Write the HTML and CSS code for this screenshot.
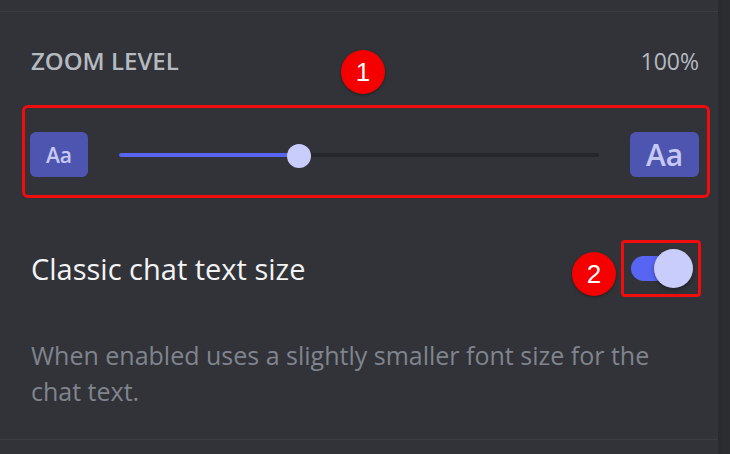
FILE: index.html
```html
<!doctype html>
<html lang="en">
<head>
	<meta charset="UTF-8">
	<title>Zoom level</title>
	<link rel="stylesheet" href="styles.css">
</head>
<body>
	<div class="panel">
		<div class="content">
			<div class="rule"></div>
			<div class="section-head">
				<span class="section-title">ZOOM LEVEL</span>
				<span class="section-value">100%</span>
			</div>
			<div class="slider-box">
				<span class="aa aa-small">Aa</span>
				<div class="track">
					<div class="track-fill" style="width: 37.5%"></div>
					<span class="thumb" style="left: 37.5%"></span>
				</div>
				<span class="aa aa-large">Aa</span>
			</div>
			<div class="setting">
				<span class="setting-title">Classic chat text size</span>
				<div class="toggle-box">
					<div class="toggle"><span class="toggle-knob"></span></div>
				</div>
			</div>
			<p class="setting-desc">When enabled uses a slightly smaller font size for the chat text.</p>
			<div class="rule rule-bottom"></div>

			<span class="step step-1">1</span>
			<span class="step step-2">2</span>
		</div>
		<div class="scrollbar"></div>
	</div>
</body>
</html>
```

FILE: styles.css
```css
* { margin: 0; padding: 0; box-sizing: border-box; }
body { background: #313338; font-family: "Open Sans", "Noto Sans", sans-serif; overflow: hidden; }

.panel { display: flex; height: 454px; }
.content { flex: 1; position: relative; padding-top: 11px; }
.scrollbar { width: 12px; background: #2b2d31; border-left: 4px solid #2a2b30; }

.rule { height: 1px; background: #3b3d43; }
.rule-bottom { margin-top: 30px; }

.section-head { display: flex; justify-content: space-between; align-items: center; padding: 0 19px 0 31px; margin-top: 33px; line-height: 32px; color: #b5bac1; }
.section-title { font-size: 24px; font-weight: 600; }
.section-value { font-size: 23px; font-weight: 400; }

.slider-box { display: flex; align-items: center; margin: 28px 8px 0 22px; padding: 24px 8px 18px 5px; border: 3px solid #f10d0d; border-radius: 6px; }
.aa { display: flex; align-items: center; justify-content: center; height: 45px; background: #4e55b0; color: #c6c9f4; font-weight: 600; border-radius: 6px; }
.aa-small { width: 58px; font-size: 21px; }
.aa-large { width: 69px; font-size: 30px; }
.track { flex: 1; position: relative; height: 4px; margin: 0 31px; background: #26272b; border-radius: 2px; }
.track-fill { height: 100%; background: #5865f2; border-radius: 2px; }
.thumb { position: absolute; top: 50%; width: 24px; height: 24px; margin: -11px 0 0 -12px; background: #c9cdfb; border-radius: 50%; }

.setting { display: flex; justify-content: space-between; align-items: center; padding: 0 17px 0 31px; margin-top: 42px; }
.setting-title { color: #f2f3f5; font-size: 29px; }
.toggle-box { width: 80px; height: 57px; padding: 13px 0 0 7px; border: 3px solid #f10d0d; border-radius: 4px; }
.toggle { position: relative; width: 50px; height: 25px; background: #5865f2; border-radius: 13px; }
.toggle-knob { position: absolute; top: -7px; left: 23px; width: 39px; height: 39px; background: #c9cdfb; border-radius: 50%; box-shadow: 0 2px 4px rgba(0, 0, 0, 0.35); }

.setting-desc { margin-top: 40px; padding: 0 40px 0 31px; color: #80848e; font-size: 25px; line-height: 36px; }

.step { position: absolute; width: 44px; height: 44px; display: flex; align-items: center; justify-content: center; background: #f50000; color: #fff; border-radius: 50%; font-family: "Liberation Sans", Arial, sans-serif; font-size: 26px; box-shadow: 0 1px 3px rgba(0, 0, 0, 0.4); }
.step-1 { left: 341px; top: 50px; }
.step-2 { left: 572px; top: 252px; }
```
